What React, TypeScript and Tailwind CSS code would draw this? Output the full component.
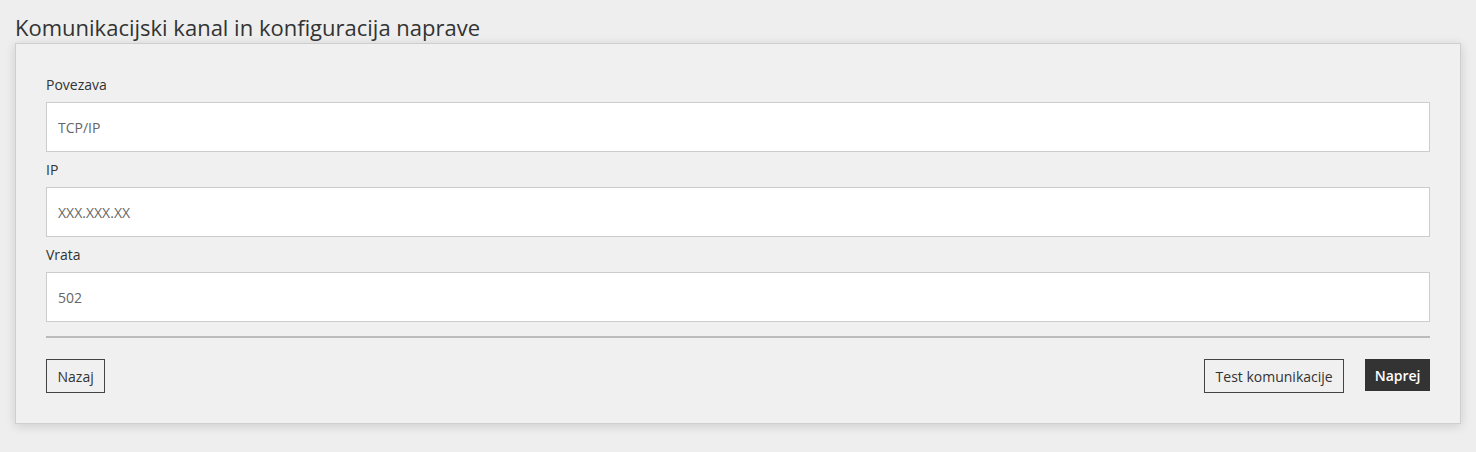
import React from 'react'

const fields = [
  { label: 'Povezava', value: 'TCP/IP' },
  { label: 'IP', value: 'XXX.XXX.XX' },
  { label: 'Vrata', value: '502' },
]

const App = () => {
  return (
    <div
      className="min-h-[452px] bg-[#eeeeee] px-[15px] pt-[12px] text-[#333333]"
      style={{ fontFamily: '"Open Sans", "Noto Sans", sans-serif' }}
    >
      {/* Title */}
      <h1 className="mb-px text-[22px] leading-[30px] font-normal">
        Komunikacijski kanal in konfiguracija naprave
      </h1>

      {/* Panel */}
      <div className="border border-[#cfcfcf] bg-[#f0f0f0] px-[30px] pt-[31px] pb-[30px] shadow-[0_2px_10px_rgba(0,0,0,0.14)]">
        {fields.map((field) => (
          <div key={field.label} className="mb-[8px] last:mb-0">
            <label className="mb-[7px] block text-[14px] leading-[20px]">{field.label}</label>
            <input
              readOnly
              value={field.value}
              className="block h-[50px] w-full border border-[#cccccc] bg-white px-[11px] text-[14px] text-[#666666] outline-none"
            />
          </div>
        ))}

        <div className="mt-[14px] h-[2px] bg-[#bbbbbb]" />

        {/* Actions */}
        <div className="mt-[21px] flex items-start justify-between">
          <button className="h-[34px] border border-[#444444] px-[10.5px] text-[14px] text-[#333333]">
            Nazaj
          </button>
          <div className="flex items-start gap-[21px]">
            <button className="h-[34px] border border-[#444444] px-[10.5px] text-[14px] text-[#333333]">
              Test komunikacije
            </button>
            <button className="h-[32px] bg-[#333333] px-[9.5px] text-[14px] font-semibold text-white">
              Naprej
            </button>
          </div>
        </div>
      </div>
    </div>
  )
}

export default App
